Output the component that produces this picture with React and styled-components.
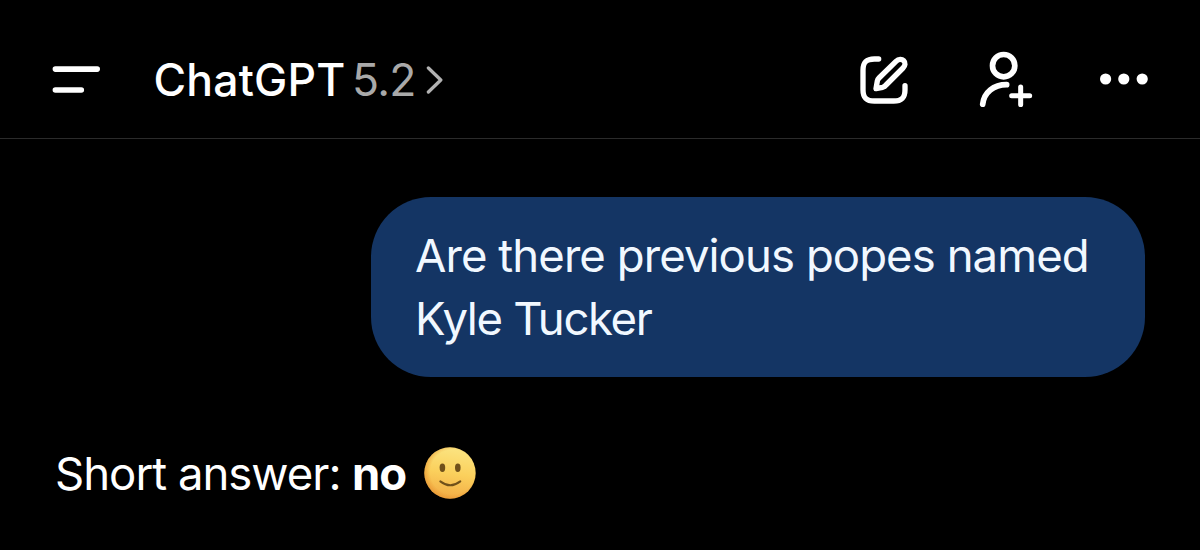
import React from 'react'

import styled, { createGlobalStyle } from 'styled-components'

const GlobalStyle = createGlobalStyle`
  body {
    margin: 0;
    background: #000;
  }
`

const Screen = styled.div`
  box-sizing: border-box;
  width: 1200px;
  height: 550px;
  overflow: hidden;
  background: #000;
  color: #fff;
  font-family: Inter, 'Liberation Sans', sans-serif;
  font-size: 45.5px;
  line-height: 63px;
  display: flex;
  flex-direction: column;
`

const Header = styled.header`
  box-sizing: border-box;
  height: 139px;
  padding: 20px 52px 0;
  border-bottom: 1px solid #2b2b2b;
  display: flex;
  align-items: center;
`

const IconButton = styled.button`
  padding: 0;
  border: none;
  background: transparent;
  color: #fff;
  display: flex;
  cursor: pointer;

  svg {
    display: block;
  }
`

const ModelButton = styled(IconButton)`
  margin-left: 53.5px;
  padding-top: 2px;
  align-items: center;
  font-family: inherit;
  font-size: 44.5px;
  line-height: 54px;
  text-align: left;
`

const ModelName = styled.span`
  width: 198.5px;
  font-weight: 500;
  letter-spacing: 0.2px;
`

const ModelVersion = styled.span`
  width: 74px;
  color: #a9a9a9;
  letter-spacing: -0.7px;
`

const Actions = styled.div`
  margin-left: auto;
  display: flex;
  align-items: center;
`

const Action = styled(IconButton)`
  margin-left: ${props => props.$gap || 0}px;
`

const Conversation = styled.main`
  padding: 58px 55px 0;
  display: flex;
  flex-direction: column;
`

const UserBubble = styled.div`
  box-sizing: border-box;
  align-self: flex-end;
  width: 774px;
  height: 180px;
  padding: 27px 44px;
  border-radius: 60px;
  background: #143564;
  color: #f1f8ff;
  white-space: nowrap;
`

const Line = styled.div`
  letter-spacing: ${props => props.$tracking || 0}px;
`

const Answer = styled.div`
  margin-top: 65px;
  display: flex;
  align-items: center;
  white-space: nowrap;

  svg {
    margin-bottom: 2px;
  }
`

const AnswerText = styled.span`
  width: 297px;
  letter-spacing: -1px;
`

const Strong = styled.strong`
  width: 72px;
  font-weight: 650;
  letter-spacing: -1px;
`

const MenuIcon = () => (
  <svg width="48" height="28" viewBox="0 0 48 28" stroke="currentColor" strokeWidth="5.6" strokeLinecap="round">
    <path d="M3.4 4.1H45.2M3.4 25H29.3" />
  </svg>
)

const ChevronIcon = () => (
  <svg width="18" height="28" viewBox="0 0 18 28" fill="none" stroke="#b2b2b2" strokeWidth="3.3" strokeLinecap="round" strokeLinejoin="round">
    <path d="M2.4 2L14.8 14L2.4 26" />
  </svg>
)

const ComposeIcon = () => (
  <svg width="48" height="50" viewBox="45 42 144 150" fill="none" stroke="currentColor" strokeWidth="16" strokeLinecap="round" strokeLinejoin="round">
    <path d="M101 57H88C63 57 54 67 54 91V149C54 173 64 183 88 183H146C170 183 180 173 180 149V137" />
    <path d="M93 146L97 123Q98 118 102 114L153 64C161 56 171 57 176 62C182 68 181 77 174 84L123 135Q119 140 113 142Z" />
  </svg>
)

const AddPersonIcon = () => (
  <svg width="54" height="56" viewBox="42 33 162 168" fill="none" stroke="currentColor" strokeLinecap="round">
    <circle cx="116" cy="77" r="33.5" strokeWidth="17" />
    <path d="M53 193C57 157 86 134 125 134" strokeWidth="17" />
    <path d="M140 167.5H194M167 141V194" strokeWidth="15" />
  </svg>
)

const MoreIcon = () => (
  <svg width="48" height="12" viewBox="0 0 48 12" fill="currentColor">
    <circle cx="5.6" cy="6" r="5.6" />
    <circle cx="23.8" cy="6" r="5.6" />
    <circle cx="42.2" cy="6" r="5.6" />
  </svg>
)

const SmileEmoji = () => (
  <svg width="52" height="52" viewBox="0 0 52 52" role="img" aria-label="slightly smiling face">
    <defs>
      <linearGradient id="face" x1="0.55" y1="0" x2="0.4" y2="1">
        <stop offset="0" stopColor="#fbe481" />
        <stop offset="0.5" stopColor="#fbd05c" />
        <stop offset="1" stopColor="#f2ab45" />
      </linearGradient>
      <radialGradient id="shade" cx="0.55" cy="0.48" r="0.54">
        <stop offset="0.8" stopColor="#e88f26" stopOpacity="0" />
        <stop offset="1" stopColor="#e2892a" stopOpacity="0.5" />
      </radialGradient>
    </defs>
    <circle cx="26" cy="26" r="25.7" fill="url(#face)" />
    <circle cx="26" cy="26" r="25.7" fill="url(#shade)" />
    <ellipse cx="18.4" cy="20.8" rx="2.8" ry="4.2" fill="#70501a" />
    <ellipse cx="33.8" cy="20.8" rx="2.8" ry="4.2" fill="#70501a" />
    <path d="M16.3 34.4Q26.2 42.2 36.3 34.4" fill="none" stroke="#70501a" strokeWidth="2" strokeLinecap="round" />
  </svg>
)

export default function App() {
  return (
    <Screen>
      <GlobalStyle />
      <Header>
        <IconButton aria-label="Menu"><MenuIcon /></IconButton>
        <ModelButton>
          <ModelName>ChatGPT</ModelName>
          <ModelVersion>5.2</ModelVersion>
          <ChevronIcon />
        </ModelButton>
        <Actions>
          <Action aria-label="New chat"><ComposeIcon /></Action>
          <Action aria-label="Add people" $gap={71}><AddPersonIcon /></Action>
          <Action aria-label="More" $gap={67}><MoreIcon /></Action>
        </Actions>
      </Header>
      <Conversation>
        <UserBubble>
          <Line $tracking={-0.93}>Are there previous popes named</Line>
          <Line $tracking={-1.35}>Kyle Tucker</Line>
        </UserBubble>
        <Answer>
          <AnswerText>Short answer:</AnswerText>
          <Strong>no</Strong>
          <SmileEmoji />
        </Answer>
      </Conversation>
    </Screen>
  )
}
